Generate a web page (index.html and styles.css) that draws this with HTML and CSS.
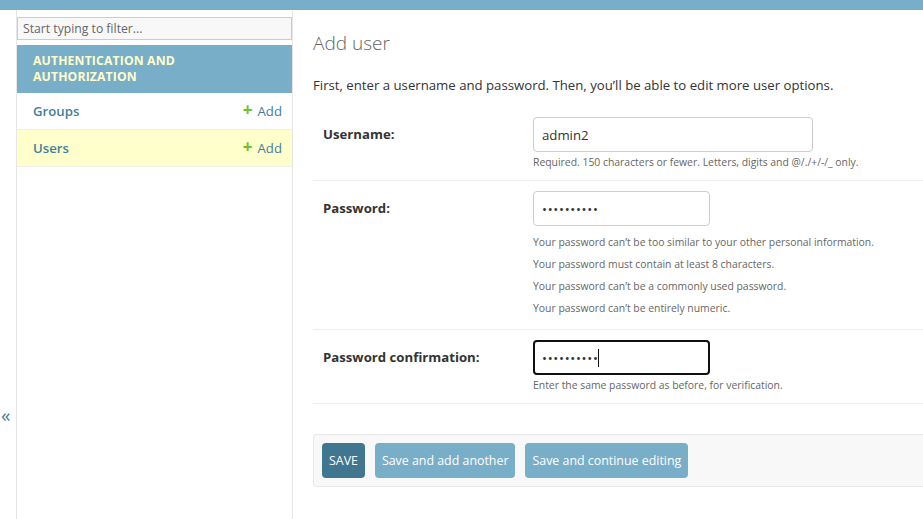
FILE: index.html
```html
<!DOCTYPE html>
<html lang="en">
<head>
  <meta charset="UTF-8" />
  <title>Add user | Django site admin</title>
  <link rel="stylesheet" href="styles.css">
</head>
<body>
  <div id="header"></div>

  <div id="main">
    <button class="toggle-nav-sidebar" aria-label="Toggle navigation">&laquo;</button>

    <nav id="nav-sidebar">
      <input type="search" id="nav-filter" placeholder="Start typing to filter...">
      <table class="app-list">
        <caption>Authentication and Authorization</caption>
        <tr>
          <th>Groups</th>
          <td class="addlink"><span class="plus">+</span>Add</td>
        </tr>
        <tr class="current-model">
          <th>Users</th>
          <td class="addlink"><span class="plus">+</span>Add</td>
        </tr>
      </table>
    </nav>

    <div id="content">
      <h1>Add user</h1>
      <p class="intro">First, enter a username and password. Then, you’ll be able to edit more user options.</p>

      <form>
        <div class="form-row">
          <label for="id_username">Username:</label>
          <div class="field">
            <input type="text" id="id_username" class="wide" value="admin2">
            <div class="help">Required. 150 characters or fewer. Letters, digits and @/./+/-/_ only.</div>
          </div>
        </div>

        <div class="form-row">
          <label for="id_password1">Password:</label>
          <div class="field">
            <input type="password" id="id_password1" value="secret1234">
            <ul class="help">
              <li>Your password can’t be too similar to your other personal information.</li>
              <li>Your password must contain at least 8 characters.</li>
              <li>Your password can’t be a commonly used password.</li>
              <li>Your password can’t be entirely numeric.</li>
            </ul>
          </div>
        </div>

        <div class="form-row">
          <label for="id_password2">Password confirmation:</label>
          <div class="field">
            <span class="focus-wrap">
              <input type="password" id="id_password2" class="focused" value="secret1234">
              <span class="caret"></span>
            </span>
            <div class="help">Enter the same password as before, for verification.</div>
          </div>
        </div>

        <div class="submit-row">
          <button type="button" class="default">SAVE</button>
          <button type="button">Save and add another</button>
          <button type="button">Save and continue editing</button>
        </div>
      </form>
    </div>
  </div>
</body>
</html>
```

FILE: styles.css
```css
body {
  margin: 0;
  font-family: "Segoe UI", "Open Sans", sans-serif;
  font-size: 13.2px;
  color: #333;
  background: #fff;
  overflow: hidden;
}
#header {
  height: 10px;
  background: #79aec8;
}
#main {
  display: flex;
  min-height: 810px;
}
.toggle-nav-sidebar {
  flex: 0 0 17px;
  display: flex;
  align-items: center;
  justify-content: flex-start;
  padding: 0 0 0 1px;
  border: 0;
  border-right: 1px solid #e6e6e6;
  background: #fff;
  color: #447e9b;
  font-family: inherit;
  font-size: 19px;
  cursor: pointer;
}
#nav-sidebar {
  flex: 0 0 275px;
  border-right: 1px solid #e6e6e6;
  padding-top: 7px;
}
#nav-filter {
  display: block;
  width: 100%;
  box-sizing: border-box;
  height: 23px;
  margin: 0 0 5px;
  padding: 2px 5px;
  border: 1px solid #ccc;
  background: #f8f8f8;
  font-family: inherit;
  font-size: 12.2px;
  color: #333;
}
#nav-filter::placeholder {
  color: #666;
}
.app-list {
  width: 100%;
  border-collapse: collapse;
}
.app-list caption {
  background: #79aec8;
  color: #ffc;
  text-align: left;
  text-transform: uppercase;
  font-weight: 700;
  font-size: 12.2px;
  line-height: 16px;
  letter-spacing: 0.15px;
  padding: 8px 16px;
}
.app-list tr {
  border-bottom: 1px solid #eee;
}
.app-list th, .app-list td {
  height: 20px;
  padding: 8px 16px;
  line-height: 20px;
  color: #447e9b;
}
.app-list th {
  text-align: left;
  font-weight: 600;
  font-size: 13.2px;
}
.app-list td.addlink {
  text-align: right;
  padding-right: 10px;
  font-size: 13.2px;
  white-space: nowrap;
}
.plus {
  color: #70bf2b;
  font-weight: 700;
  font-size: 17px;
  line-height: 0;
  margin-right: 5px;
}
.current-model {
  background: #ffc;
}
#content {
  flex: 1;
  padding: 21px 0 20px 20px;
}
h1 {
  margin: 0 0 19px;
  font-size: 19px;
  line-height: 24px;
  font-weight: 300;
  color: #666;
}
.intro {
  margin: 0 0 11px;
  line-height: 22px;
}
.form-row {
  display: flex;
  padding: 10px;
  border-bottom: 1px solid #eee;
}
.form-row label {
  flex: 0 0 210px;
  font-weight: 700;
  line-height: 35px;
}
.field input {
  display: block;
  box-sizing: border-box;
  width: 177px;
  height: 35px;
  padding: 8px;
  border: 1px solid #ccc;
  border-radius: 4px;
  font-family: inherit;
  font-size: 13.2px;
  color: #333;
}
.field input[type=password] {
  letter-spacing: 0.7px;
}
.field input.wide {
  width: 280px;
}
.focus-wrap {
  position: relative;
  display: block;
  width: 177px;
}
.field input.focused {
  border: 2px solid #101010;
  padding-left: 7px;
}
.caret {
  position: absolute;
  left: 65px;
  top: 9px;
  width: 1px;
  height: 18px;
  background: #111;
}
.help {
  margin: 3px 0 0;
  font-size: 10.4px;
  line-height: 15px;
  color: #666;
}
ul.help {
  margin-top: 5px;
  padding: 0;
  list-style: none;
}
ul.help li {
  line-height: 22px;
}
.submit-row {
  display: flex;
  gap: 10px;
  margin-top: 30px;
  padding: 8px;
  background: #f8f8f8;
  border: 1px solid #e8e8e8;
  border-right: 0;
  border-radius: 4px 0 0 4px;
}
.submit-row button {
  height: 35px;
  padding: 0 7px;
  border: 0;
  border-radius: 4px;
  background: #79aec8;
  color: #fff;
  font-family: inherit;
  font-size: 12.4px;
  cursor: pointer;
}
.submit-row button.default {
  background: #417690;
}
```
